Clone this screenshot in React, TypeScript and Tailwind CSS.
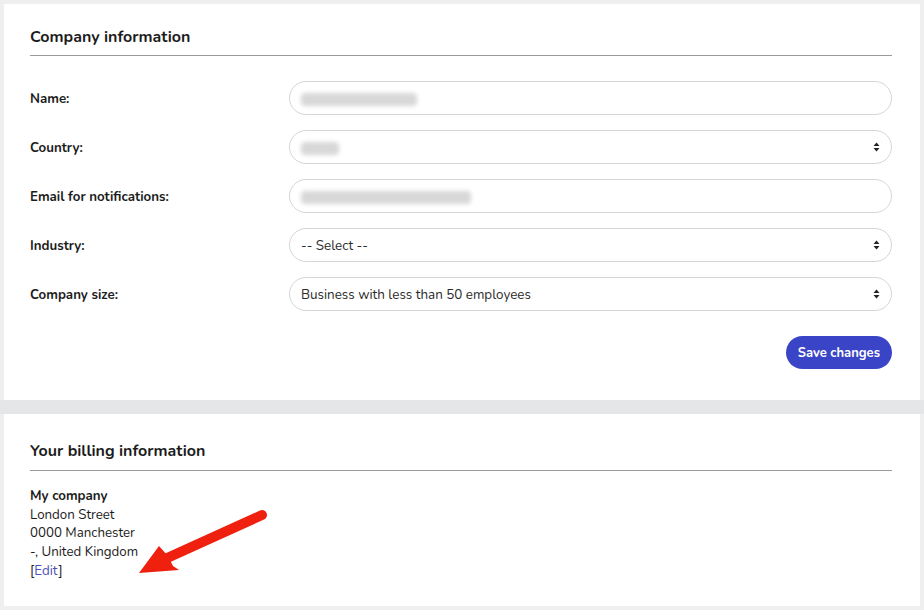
import React from "react";

const font = { fontFamily: "Nunito, Lato, 'Noto Sans', sans-serif" };

function Arrows() {
  return (
    <svg width="7" height="10" viewBox="0 0 7 10" className="absolute right-[11px] top-1/2 -translate-y-1/2">
      <path d="M3.5 0.5 L6.5 4 L0.5 4 Z" fill="#222" />
      <path d="M3.5 9.5 L6.5 6 L0.5 6 Z" fill="#222" />
    </svg>
  );
}

function Blur({ w }: { w: number }) {
  return <div className="h-[13px] bg-[#d8d8d8] blur-[2px] rounded-sm" style={{ width: w }} />;
}

function Field({ children, select }: { children?: React.ReactNode; select?: boolean }) {
  return (
    <div className="relative flex-1 h-[34px] rounded-full border border-[#d6d6d6] bg-white flex items-center pl-[11px] pt-[3px] text-[13.4px] text-[#2a2a2a]">
      {children}
      {select && <Arrows />}
    </div>
  );
}

function Row({ label, children }: { label: string; children: React.ReactNode }) {
  return (
    <div className="flex items-center">
      <div className="w-[259px] pt-[3px] text-[13.3px] font-bold text-[#1c1c1c]">{label}</div>
      {children}
    </div>
  );
}

export default function App() {
  return (
    <div className="w-[924px] h-[610px] bg-[#efefef] overflow-hidden relative" style={font}>
      <div className="ml-[4px] mr-[4px] mt-[4px] bg-white pl-[26px] pr-[28px] pt-[22px] pb-[31px]">
        <div className="border-b border-[#9a9a9a] pb-[8px]">
          <h2 className="text-[16px] leading-[20px] pt-[1px] font-bold text-[#1c1c1c]">Company information</h2>
        </div>
        <div className="mt-[25px] flex flex-col gap-[15px]">
          <Row label="Name:">
            <Field><Blur w={116} /></Field>
          </Row>
          <Row label="Country:">
            <Field select><Blur w={38} /></Field>
          </Row>
          <Row label="Email for notifications:">
            <Field><Blur w={170} /></Field>
          </Row>
          <Row label="Industry:">
            <Field select>-- Select --</Field>
          </Row>
          <Row label="Company size:">
            <Field select>Business with less than 50 employees</Field>
          </Row>
        </div>
        <div className="mt-[25px] flex justify-end">
          <button className="h-[33px] px-[12px] pt-[2px] rounded-full bg-[#3a44c6] text-white text-[13px] font-bold">
            Save changes
          </button>
        </div>
      </div>
      <div className="h-[14px] bg-[#e5e6e8]" />
      <div className="ml-[4px] mr-[4px] bg-white pl-[26px] pr-[28px] pt-[26px] pb-[25px] relative">
        <div className="border-b border-[#9a9a9a] pb-[9px]">
          <h2 className="text-[16px] leading-[20px] pt-[1px] font-bold text-[#1c1c1c]">Your billing information</h2>
        </div>
        <div className="mt-[16px] text-[13.3px] leading-[18.7px] text-[#1c1c1c]">
          <div className="font-bold">My company</div>
          <div>London Street</div>
          <div>0000 Manchester</div>
          <div>-, United Kingdom</div>
          <div>
            [<span className="text-[#4b50b8]">Edit</span>]
          </div>
        </div>
      </div>
      <svg className="absolute left-0 top-0 pointer-events-none" width="924" height="610" viewBox="0 0 924 610">
        <line x1="262" y1="515" x2="165" y2="559" stroke="#f0200f" strokeWidth="10" strokeLinecap="round" />
        <path d="M139 573 L159 546 L168 556 L173 566 L179 570 Z" fill="#f0200f" />
      </svg>
    </div>
  );
}
